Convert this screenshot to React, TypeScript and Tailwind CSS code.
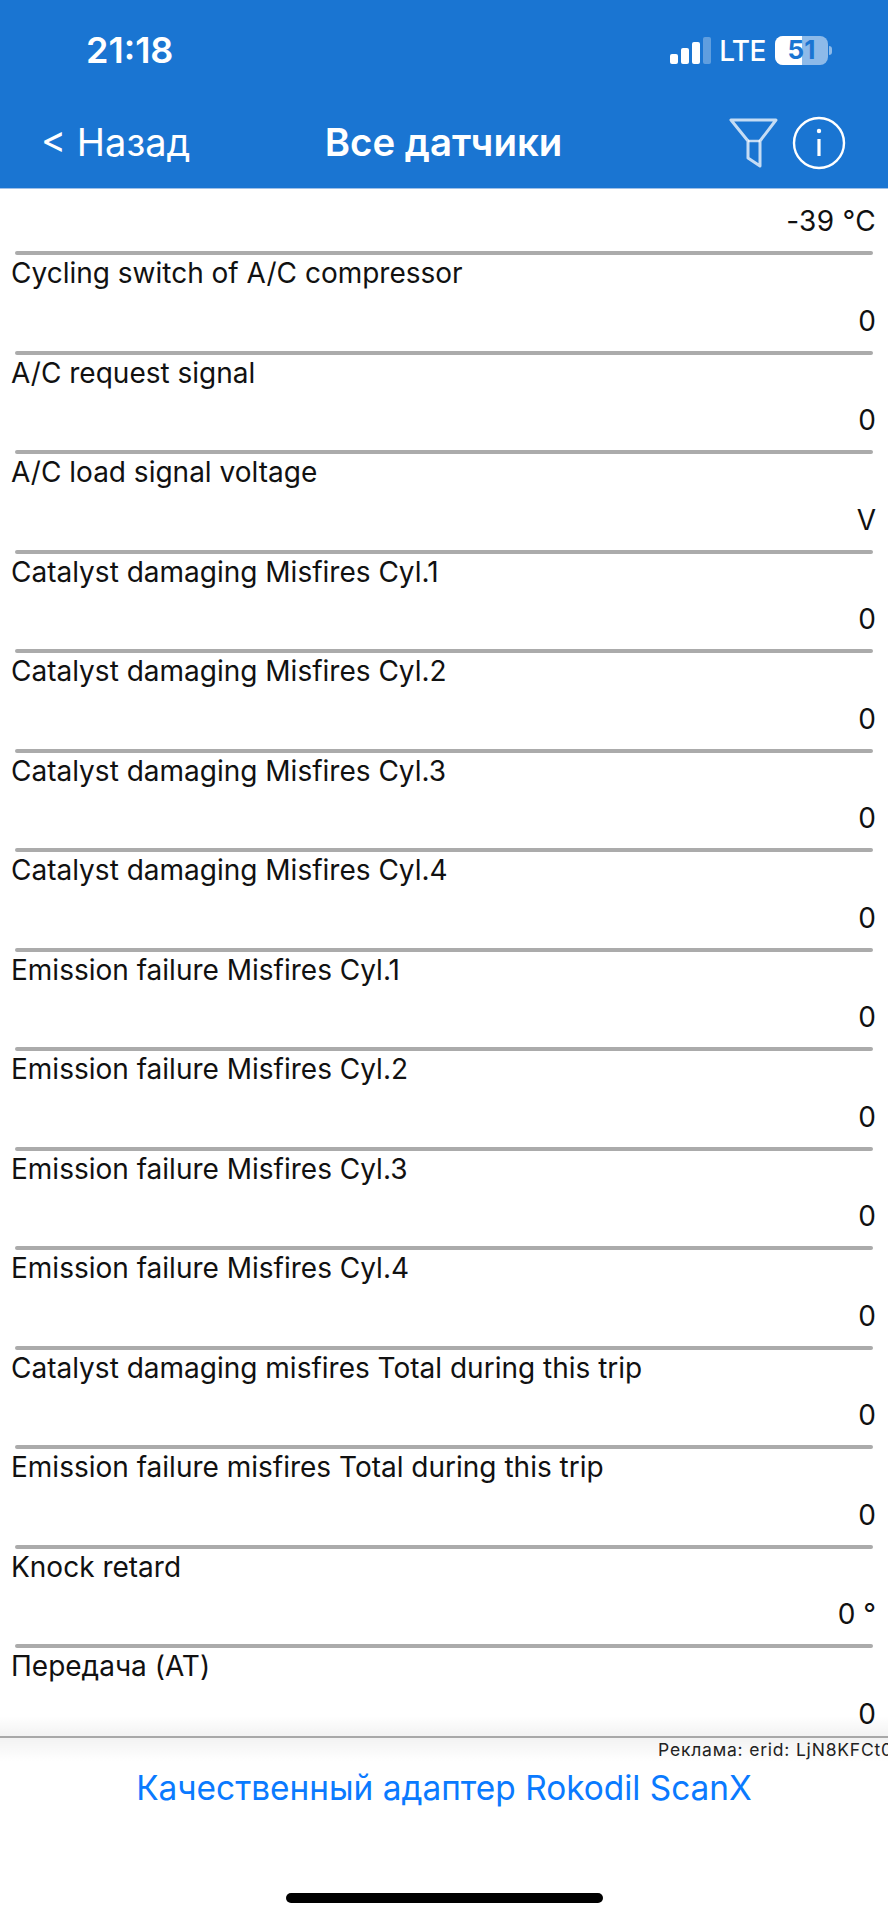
import React from 'react';

const rows = [
  { label: 'Cycling switch of A/C compressor', value: '0' },
  { label: 'A/C request signal', value: '0' },
  { label: 'A/C load signal voltage', value: 'V' },
  { label: 'Catalyst damaging Misfires Cyl.1', value: '0' },
  { label: 'Catalyst damaging Misfires Cyl.2', value: '0' },
  { label: 'Catalyst damaging Misfires Cyl.3', value: '0' },
  { label: 'Catalyst damaging Misfires Cyl.4', value: '0' },
  { label: 'Emission failure Misfires Cyl.1', value: '0' },
  { label: 'Emission failure Misfires Cyl.2', value: '0' },
  { label: 'Emission failure Misfires Cyl.3', value: '0' },
  { label: 'Emission failure Misfires Cyl.4', value: '0' },
  { label: 'Catalyst damaging misfires Total during this trip', value: '0' },
  { label: 'Emission failure misfires Total during this trip', value: '0' },
  { label: 'Knock retard', value: '0 °' },
  { label: 'Передача (AT)', value: '0' },
];

function Divider() {
  return <div className="mx-[15px] h-1 shrink-0 rounded-full bg-[#ababab]" />;
}

function StatusIcons() {
  return (
    <div className="flex items-center">
      <div className="flex items-end gap-[3px]">
        <div className="h-[10px] w-[8px] rounded-[2px] bg-white" />
        <div className="h-[16px] w-[8px] rounded-[2px] bg-white" />
        <div className="h-[22px] w-[8px] rounded-[2px] bg-white" />
        <div className="h-[27px] w-[8px] rounded-[2px] bg-white/30" />
      </div>
      <span className="ml-[8px] mt-[2px] text-[28px] font-medium leading-none tracking-[-0.5px] text-white">LTE</span>
      <div className="relative ml-[9px] h-[29px] w-[53px] overflow-hidden rounded-[8px] bg-white/50">
        <div className="h-full w-[27px] bg-white" />
        <span className="absolute inset-0 flex items-center justify-center text-[26px] font-bold leading-none text-[#1a75d2]">51</span>
      </div>
      <div className="ml-[1px] h-[9px] w-[3px] rounded-r-full bg-white/50" />
    </div>
  );
}

export default function App() {
  return (
    <div className="flex h-[1920px] w-[888px] flex-col overflow-hidden bg-white font-['Inter','Liberation_Sans',sans-serif] text-[#111]">
      <header className="h-[189px] shrink-0 border-b border-[#9fc0e8] bg-[#1a75d2] text-white">
        <div className="flex h-[100px] items-center justify-between pl-[86px] pr-[56px]">
          <span className="text-[36px] font-semibold leading-none">21:18</span>
          <StatusIcons />
        </div>
        <div className="flex h-[88px] items-start justify-between pl-[41px] pr-[42px]">
          <span className="mt-[17px] w-[246px] text-[38px] leading-[50px]">&lt; Назад</span>
          <span className="mt-[17px] text-[38.4px] font-semibold leading-[50px]">Все датчики</span>
          <div className="mt-[16px] flex w-[246px] items-center justify-end gap-[13px]">
            <svg width="50" height="52" viewBox="0 0 50 52" fill="none" className="text-white/75">
              <path d="M2 3 H47 L31 24 V49 L19 41 V24 Z" stroke="currentColor" strokeWidth="3" strokeLinejoin="round" />
              <path d="M19 24 H31" stroke="currentColor" strokeWidth="2.5" />
            </svg>
            <svg width="54" height="54" viewBox="0 0 54 54" fill="none" stroke="white">
              <circle cx="27" cy="27" r="25" strokeWidth="2.4" />
              <path d="M27 23 V40" strokeWidth="3.2" />
              <circle cx="27" cy="15" r="2.2" fill="white" stroke="none" />
            </svg>
          </div>
        </div>
      </header>

      <main className="h-[1547px] shrink-0 overflow-hidden text-[28px] leading-[34px]">
        <div className="flex h-[66px] flex-col justify-end">
          <div className="pb-[13px] pr-[12px] text-right tracking-[0.3px]">-39 °C</div>
          <Divider />
        </div>
        {rows.map((row) => (
          <div key={row.label} className="flex h-[99.5px] flex-col">
            <div className="pl-[11px] pt-[1px]">{row.label}</div>
            <div className="flex flex-1 items-end justify-end pb-[13px] pr-[12px]">{row.value}</div>
            <Divider />
          </div>
        ))}
      </main>

      <footer className="relative flex-1">
        <div className="absolute inset-x-0 -top-[20px] h-[20px] bg-gradient-to-b from-transparent to-black/5" />
        <div className="h-[2px] bg-[#a8a8a8]" />
        <div className="h-[24px] bg-gradient-to-b from-black/5 to-transparent" />
        <div className="-mt-[23px] overflow-hidden whitespace-nowrap pl-[658px] text-[17.5px] leading-[22px] tracking-[0.8px] text-[#222]">Реклама: erid: LjN8KFCt0</div>
        <div className="mt-[7px] text-center text-[33.4px] leading-[40px] text-[#0a7aff]">Качественный адаптер Rokodil ScanX</div>
        <div className="mx-auto mt-[85px] h-[10px] w-[317px] rounded-full bg-black" />
      </footer>
    </div>
  );
}
